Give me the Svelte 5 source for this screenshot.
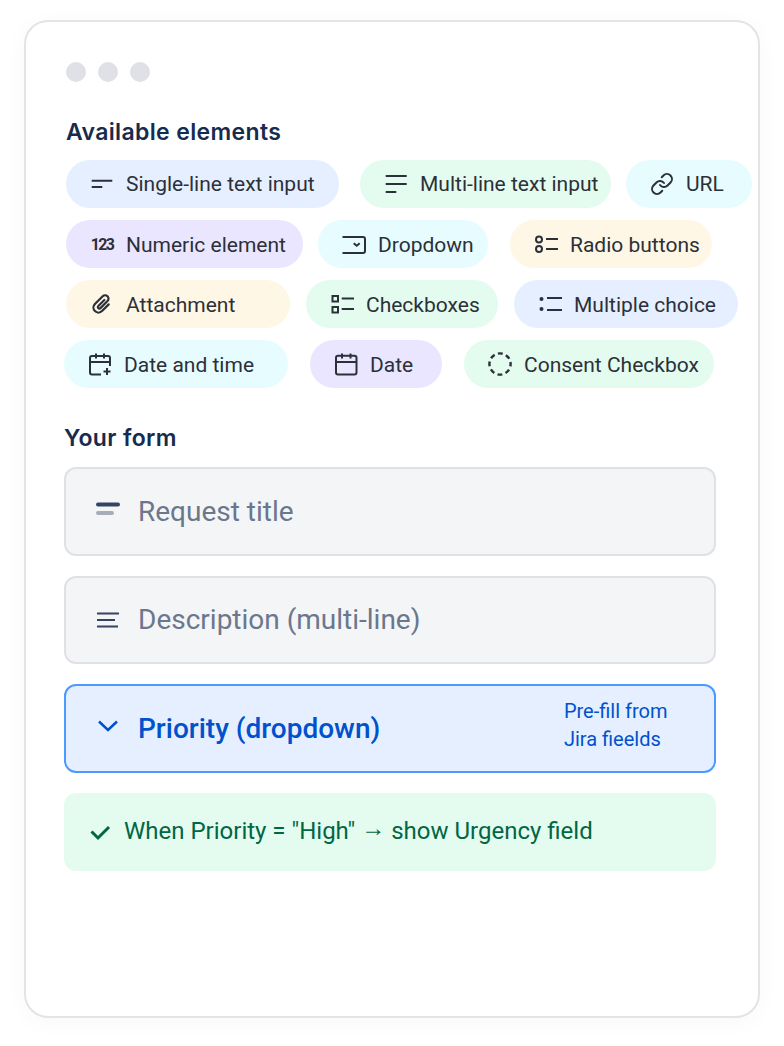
<script lang="ts">
	type Tone = 'blue' | 'green' | 'cyan' | 'purple' | 'yellow';

	interface Chip {
		label: string;
		tone: Tone;
		icon: string;
		width: number;
		gap?: number;
	}

	const rows: { shifted: boolean; chips: Chip[] }[] = [
		{
			shifted: true,
			chips: [
				{ label: 'Single-line text input', tone: 'blue', icon: 'single', width: 273 },
				{ label: 'Multi-line text input', tone: 'green', icon: 'multi', width: 251, gap: 21 },
				{ label: 'URL', tone: 'cyan', icon: 'link', width: 126, gap: 15 }
			]
		},
		{
			shifted: true,
			chips: [
				{ label: 'Numeric element', tone: 'purple', icon: 'numeric', width: 237 },
				{ label: 'Dropdown', tone: 'cyan', icon: 'dropdown', width: 170, gap: 15 },
				{ label: 'Radio buttons', tone: 'yellow', icon: 'radio', width: 202, gap: 22 }
			]
		},
		{
			shifted: true,
			chips: [
				{ label: 'Attachment', tone: 'yellow', icon: 'clip', width: 224 },
				{ label: 'Checkboxes', tone: 'green', icon: 'checks', width: 192, gap: 16 },
				{ label: 'Multiple choice', tone: 'blue', icon: 'bullets', width: 224, gap: 16 }
			]
		},
		{
			shifted: false,
			chips: [
				{ label: 'Date and time', tone: 'cyan', icon: 'datetime', width: 224 },
				{ label: 'Date', tone: 'purple', icon: 'date', width: 132, gap: 22 },
				{ label: 'Consent Checkbox', tone: 'green', icon: 'dashed', width: 250, gap: 22 }
			]
		}
	];
</script>

<div class="page">
	<div class="card">
		<div class="dots">
			<span></span>
			<span></span>
			<span></span>
		</div>

		<h2 class="heading heading--shifted">Available elements</h2>
		<div class="rows">
			{#each rows as row}
				<div class="row" class:row--shifted={row.shifted}>
					{#each row.chips as chip}
						<div class="chip chip--{chip.tone}" style:width="{chip.width}px" style:margin-left="{chip.gap ?? 0}px">
							{#if chip.icon === 'numeric'}
								<span class="numeric">123</span>
							{:else}
								<svg class="icon" viewBox="0 0 24 24" fill="none" stroke="currentColor" stroke-width="2">
									{#if chip.icon === 'single'}
										<path d="M1.700 8.700h20.600M1.700 15h10.600" />
									{:else if chip.icon === 'multi'}
										<path d="M1.700 4h21M1.700 12h21M1.700 20h10.600" />
									{:else if chip.icon === 'link'}
										<path stroke-linecap="round" stroke-linejoin="round" d="M10 13a5 5 0 0 0 7.540.540l3-3a5 5 0 0 0-7.070-7.070l-1.720 1.710" />
										<path stroke-linecap="round" stroke-linejoin="round" d="M14 11a5 5 0 0 0-7.540-.540l-3 3a5 5 0 0 0 7.070 7.070l1.710-1.710" />
									{:else if chip.icon === 'dropdown'}
										<path d="M0.500 5H21a2 2 0 0 1 2 2v12a2 2 0 0 1-2 2H0.500" />
										<path d="M11.700 11.200l3 2.600 3-2.600" />
									{:else if chip.icon === 'radio'}
										<circle cx="5" cy="7.500" r="3" />
										<circle cx="5" cy="17" r="3" />
										<path d="M12 7h12M12 17h12" />
									{:else if chip.icon === 'clip'}
										<path stroke-width="2.200" stroke-linecap="round" transform="rotate(45 12 12)" d="M17 7.500V17a5 5 0 0 1-10 0V6a3.400 3.400 0 0 1 6.800 0v10a1.500 1.500 0 0 1-3 0V7.500" />
									{:else if chip.icon === 'checks'}
										<rect x="2.500" y="4" width="5.500" height="5.500" />
										<rect x="2.500" y="15" width="5.500" height="5.500" />
										<path d="M11.700 6.500H24M11.700 17H24" />
									{:else if chip.icon === 'bullets'}
										<circle cx="3.500" cy="7" r="2" fill="currentColor" stroke="none" />
										<circle cx="3.500" cy="17" r="2" fill="currentColor" stroke="none" />
										<path d="M9 6h15M9 18h15" />
									{:else if chip.icon === 'datetime'}
										<path stroke-linejoin="round" d="M13 22.500H4a2 2 0 0 1-2-2V6a2 2 0 0 1 2-2h16a2 2 0 0 1 2 2v8" />
										<path d="M8 1.500v5M16 1.500v5M2 10h20M19 16v7M15.500 19.500h7" />
									{:else if chip.icon === 'date'}
										<rect x="2" y="3.800" width="20.500" height="18.700" rx="2" />
										<path d="M8 1.500v5M16.500 1.500v5M2 10h20.500" />
									{:else if chip.icon === 'dashed'}
										<circle cx="12" cy="12" r="10.600" stroke-width="2.400" stroke-dasharray="4.900 3.420" stroke-dashoffset="2.450" />
									{/if}
								</svg>
							{/if}
							<span class="chip__label">{chip.label}</span>
						</div>
					{/each}
				</div>
			{/each}
		</div>

		<h2 class="heading heading--form">Your form</h2>
		<div class="form">
			<div class="field">
				<svg class="field__icon" viewBox="0 0 24 24" fill="none" stroke-width="4" stroke-linecap="round">
					<path stroke="#344563" d="M2 5.500h20" />
					<path stroke="#a5adba" d="M2 14h14" />
				</svg>
				<span>Request title</span>
			</div>
			<div class="field">
				<svg class="field__icon" viewBox="0 0 24 24" fill="none" stroke="#344563" stroke-width="2">
					<path d="M1 5.500h22M1 12h18M1 18.500h21" />
				</svg>
				<span>Description (multi-line)</span>
			</div>
			<div class="field field--active">
				<svg class="field__icon" viewBox="0 0 24 24" fill="none" stroke="#0052cc" stroke-width="2.500">
					<path d="M3 5.500l9 8.500 9-8.500" />
				</svg>
				<span class="field__title">Priority (dropdown)</span>
				<span class="field__note">Pre-fill from<br />Jira fieelds</span>
			</div>
			<div class="rule">
				<svg class="rule__icon" viewBox="0 0 24 24" fill="none" stroke="#006644" stroke-width="3">
					<path d="M3.500 11.500L10 18 21 7" />
				</svg>
				<span class="rule__text">When Priority = "High" <span class="rule__arrow">→</span> show Urgency field</span>
			</div>
		</div>
	</div>
</div>

<style>
	:global(body) {
		margin: 0;
		background: #fff;
	}

	.page {
		padding: 20px 24px 28px;
		font-family: Roboto, 'Liberation Sans', sans-serif;
	}

	.card {
		box-sizing: border-box;
		width: 736px;
		height: 998px;
		padding: 40px 38px;
		background: #fff;
		border: 2px solid #e3e4e9;
		border-radius: 24px;
		box-shadow: 0 4px 24px rgba(9, 30, 66, 0.03);
	}

	.dots {
		display: flex;
		gap: 12px;
		margin-left: 2px;
	}

	.dots span {
		width: 20px;
		height: 20px;
		border-radius: 50%;
		background: #dfe1e6;
	}

	.heading {
		margin: 0;
		font-family: Inter, sans-serif;
		font-size: 23px;
		font-weight: 600;
		letter-spacing: 0.35px;
		line-height: 28px;
		color: #172b4d;
	}

	.heading--shifted {
		margin: 36px 0 14px 2px;
	}

	.heading--form {
		margin: 36px 0 15px;
	}

	.rows {
		display: flex;
		flex-direction: column;
		gap: 12px;
	}

	.row {
		display: flex;
		white-space: nowrap;
	}

	.row--shifted {
		margin-left: 2px;
	}

	.chip {
		box-sizing: border-box;
		flex: none;
		display: flex;
		align-items: center;
		gap: 12px;
		height: 48px;
		padding-left: 24px;
		border-radius: 24px;
		font-size: 21px;
		color: #2c3038;
	}

	.row:not(:first-child) .chip__label {
		margin-top: 2px;
	}

	.chip--blue {
		background: #e6efff;
	}

	.chip--green {
		background: #e3fcef;
	}

	.chip--cyan {
		background: #e6fcff;
	}

	.chip--purple {
		background: #eae6ff;
	}

	.chip--yellow {
		background: #fff7e6;
	}

	.icon {
		flex: none;
		width: 24px;
		height: 24px;
	}

	.numeric {
		flex: none;
		width: 24px;
		font-size: 16px;
		font-weight: 700;
		letter-spacing: -1.700px;
		text-align: center;
	}

	.form {
		display: flex;
		flex-direction: column;
		gap: 20px;
		width: 652px;
	}

	.field {
		box-sizing: border-box;
		display: flex;
		align-items: center;
		gap: 18px;
		height: 88.500px;
		padding: 0 46.500px 0 30px;
		background: #f4f5f7;
		border: 2px solid #dfe1e6;
		border-radius: 12px;
		font-size: 28px;
		color: #6b778c;
	}

	.field--active {
		background: #e6efff;
		border-color: #4c9aff;
		color: #0052cc;
	}

	.field__icon {
		flex: none;
		width: 24px;
		height: 24px;
	}

	.field__title {
		font-weight: 500;
	}

	.field__note {
		margin: 0 0 7px auto;
		font-size: 20px;
		line-height: 28px;
	}

	.rule {
		display: flex;
		align-items: center;
		gap: 12px;
		height: 78px;
		padding: 0 24px;
		background: #e3fcef;
		border-radius: 12px;
		font-size: 24px;
		color: #006644;
	}

	.rule__icon {
		flex: none;
		width: 24px;
		height: 24px;
	}

	.rule__text {
		margin-bottom: 2px;
	}

	.rule__arrow {
		line-height: 1;
		vertical-align: 3px;
	}
</style>
